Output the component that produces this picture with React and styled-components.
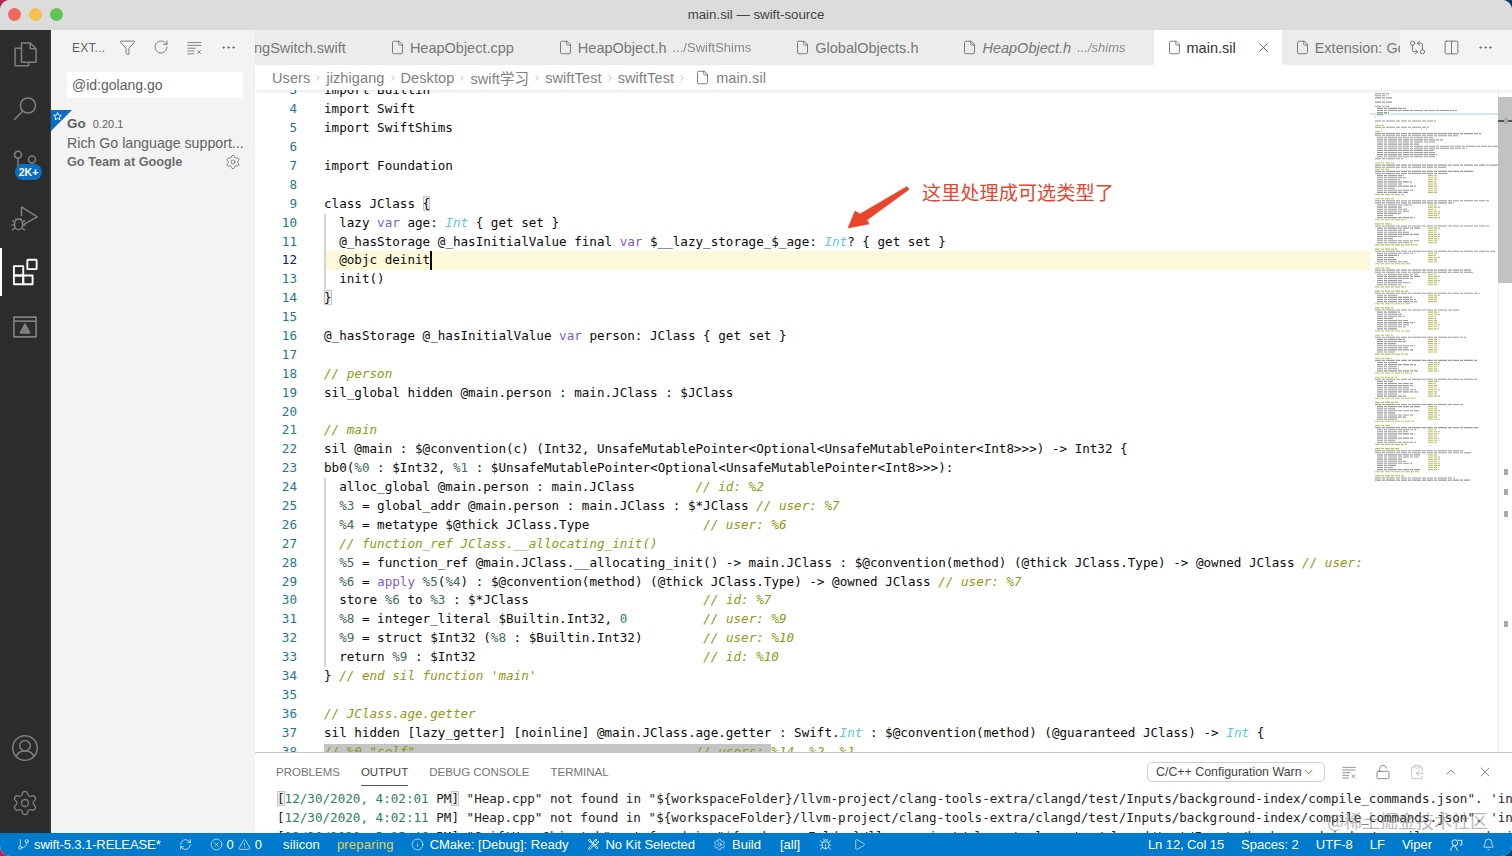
import React from "react";
import styled, { createGlobalStyle, css } from "styled-components";
import {
  Bell,
  Bug,
  ChevronDown,
  ChevronRight,
  ChevronUp,
  CircleX,
  ClipboardCopy,
  Columns2,
  Ellipsis,
  File,
  Filter,
  GitBranch,
  GitCompareArrows,
  Info,
  LockOpen,
  Play,
  RefreshCw,
  RotateCw,
  Settings,
  TriangleAlert,
  X,
} from "lucide-react";

const UI = `"Liberation Sans", "Noto Sans CJK SC", Arial, sans-serif`;
const MONO = `"DejaVu Sans Mono", "Liberation Mono", "Noto Sans CJK SC", monospace`;

const GlobalStyle = createGlobalStyle`
  html, body, #root {
    margin: 0;
    height: 100%;
    overflow: hidden;
  }
  body {
    background: linear-gradient(90deg, #b8285a 0%, #1d4f86 50%, #0b3b6b 100%);
  }
`;

const Window = styled.div`
  display: flex;
  flex-direction: column;
  height: 100vh;
  border-radius: 10px;
  overflow: hidden;
  font-family: ${UI};
  background: #fff;
  position: relative;
`;

const TitleBar = styled.div`
  flex: none;
  height: 30px;
  padding-bottom: 1px;
  box-sizing: border-box;
  background: #dcdcdc;
  display: flex;
  align-items: center;
  justify-content: center;
  position: relative;
  font-size: 13.3px;
  color: #444;
`;

const Lights = styled.div`
  position: absolute;
  left: 8px;
  top: 8px;
  display: flex;
  gap: 8px;
`;

const Light = styled.span`
  width: 13px;
  height: 13px;
  border-radius: 50%;
  background: ${(p) => p.$color};
`;

const Main = styled.div`
  flex: 1;
  min-height: 0;
  display: flex;
`;

/* activity bar */
const ActivityBar = styled.nav`
  flex: none;
  width: 50px;
  background: #2c2c2c;
  display: flex;
  flex-direction: column;
  justify-content: space-between;
  padding-bottom: 6px;
  border-right: 1px solid #3a3a3a;
`;

const ActivityGroup = styled.div`
  display: flex;
  flex-direction: column;
  gap: 6.6px;
`;

const ActivityItem = styled.div`
  height: 48px;
  display: flex;
  align-items: center;
  justify-content: center;
  position: relative;
  color: ${(p) => (p.$active ? "#fff" : "#7f7f7f")};
  box-shadow: ${(p) => (p.$active ? "inset 2px 0 #fff" : "none")};
`;

const ActivityBadge = styled.span`
  position: absolute;
  left: 15px;
  top: 25px;
  width: 27px;
  height: 16px;
  border-radius: 8px;
  background: #0a6fc2;
  color: #fff;
  font-size: 10.5px;
  font-weight: 700;
  line-height: 16px;
  text-align: center;
`;

const Glyph = ({ size = 28, width = 1.3, fill = "none", children }) => (
  <svg
    width={size}
    height={size}
    viewBox="0 0 24 24"
    fill={fill}
    stroke="currentColor"
    strokeWidth={width}
    strokeLinejoin="round"
  >
    {children}
  </svg>
);

/* side bar */
const SideBar = styled.aside`
  flex: none;
  width: 204px;
  background: #f3f3f3;
  display: flex;
  flex-direction: column;
`;

const SideHeader = styled.div`
  height: 35px;
  display: flex;
  align-items: center;
  padding-left: 21px;
  font-size: 12px;
  color: #5f5f5f;
  letter-spacing: 0.2px;
`;

const SideTitle = styled.span`
  width: 47px;
`;

const SideActions = styled.div`
  display: flex;
  gap: 17px;
  color: #666;
`;

const SearchBox = styled.div`
  margin: 7px 12px 0 16px;
  height: 26px;
  background: #fff;
  display: flex;
  align-items: center;
  padding-left: 5px;
  font-size: 14px;
  color: #616161;
`;

const ExtensionItem = styled.div`
  margin-top: 12px;
  padding: 5px 14px 0 16px;
  position: relative;
  color: #616161;
`;

const StarCorner = styled.svg`
  position: absolute;
  left: 0;
  top: 0;
`;

const ExtensionHead = styled.div`
  display: flex;
  align-items: baseline;
  gap: 7px;
  height: 18px;
  line-height: 18px;
`;

const ExtensionName = styled.span`
  font-size: 13.5px;
  font-weight: 700;
`;

const ExtensionVersion = styled.span`
  font-size: 11px;
`;

const ExtensionDesc = styled.div`
  font-size: 14.2px;
  line-height: 20px;
  white-space: nowrap;
`;

const ExtensionFoot = styled.div`
  display: flex;
  align-items: center;
  justify-content: space-between;
  margin-top: 1px;
  font-size: 12.7px;
  font-weight: 700;
  height: 16px;
  color: #6d6d6d;
`;

/* editor */
const EditorArea = styled.section`
  flex: 1;
  min-width: 0;
  display: flex;
  flex-direction: column;
  position: relative;
`;

const TabBar = styled.div`
  flex: none;
  height: 35px;
  display: flex;
  background: #ececec;
`;

const TabList = styled.div`
  flex: 1;
  min-width: 0;
  display: flex;
  overflow: hidden;
`;

const Tab = styled.div`
  flex: none;
  height: 35px;
  display: flex;
  align-items: center;
  gap: 5px;
  padding-left: ${(p) => (p.$clipped ? "0" : "13px")};
  padding-right: ${(p) => (p.$active ? "11px" : p.$italic ? "28px" : "31px")};
  margin-left: ${(p) => (p.$clipped ? "-1px" : "0")};
  font-size: 14.5px;
  white-space: nowrap;
  color: ${(p) => (p.$active ? "#333" : "#777")};
  background: ${(p) => (p.$active ? "#fff" : "transparent")};
  font-style: ${(p) => (p.$italic ? "italic" : "normal")};
`;

const TabDesc = styled.span`
  font-size: 13px;
  margin-left: 1px;
  opacity: 0.85;
`;

const TabClose = styled.span`
  display: flex;
  margin-left: 15px;
  color: #444;
`;

const TabActions = styled.div`
  flex: none;
  width: 112px;
  display: flex;
  align-items: center;
  gap: 17px;
  padding-left: 9px;
  box-sizing: border-box;
  background: #f3f3f3;
  color: #666;
`;

const Breadcrumbs = styled.div`
  flex: none;
  height: 25px;
  display: flex;
  align-items: center;
  gap: 3px;
  padding-left: 17px;
  font-size: 14.5px;
  letter-spacing: 0.1px;
  color: #808080;
  background: #fff;
  box-shadow: 0 2px 3px rgba(0, 0, 0, 0.08);
  position: relative;
  z-index: 1;
`;

const Crumb = styled.span`
  display: flex;
  align-items: center;
  gap: 6px;
  margin-left: ${(p) => (p.$file ? "5px" : "0")};
`;

const Sep = styled.span`
  display: flex;
  width: 10px;
  justify-content: center;
  color: #777;
`;

const EditorBody = styled.div`
  flex: 1;
  min-height: 0;
  display: flex;
  position: relative;
`;

const CodeScroll = styled.div`
  flex: 1;
  min-width: 0;
  overflow: hidden;
`;

const CodeLines = styled.div`
  margin-top: -8.6px;
  font-family: ${MONO};
  font-size: 12.6px;
  line-height: 18.9px;
`;

const Row = styled.div`
  display: flex;
  height: 18.9px;
  white-space: pre;
`;

const LineNo = styled.span`
  flex: none;
  width: 42px;
  margin-right: 27px;
  text-align: right;
  color: ${(p) => (p.$current ? "#0b216f" : "#237893")};
`;

const LineText = styled.span`
  flex: 1;
  color: #0a0a0a;
  ${(p) => p.$current && "background: #fdf9d8;"}
  ${(p) => p.$guide && "box-shadow: inset 2px 0 #d3d3d3;"}
`;

const tokenStyles = {
  k: css`
    color: #7a5ccf;
  `,
  t: css`
    color: #5cc6e8;
    font-style: italic;
  `,
  c: css`
    color: #8d9a12;
    font-style: italic;
  `,
  m: css`
    background: #efefef;
    box-shadow: inset 0 0 0 1px #c4c4c4;
  `,
  s: css`
    color: #8d9a12;
    font-style: italic;
    background: #c4c4c4;
  `,
  n: css`
    color: #2a7f62;
  `,
  p: css`
    color: #3f6b5a;
  `,
};

const Token = styled.span`
  ${(p) => tokenStyles[p.$kind]}
`;

const Cursor = styled.span`
  display: inline-block;
  width: 2px;
  height: 18.9px;
  margin-right: -2px;
  background: #000;
  vertical-align: top;
`;

const Minimap = styled.div`
  flex: none;
  width: 128px;
  overflow: hidden;
  filter: blur(0.4px);
`;

const Scrollbar = styled.div`
  flex: none;
  width: 14px;
  padding-top: 7px;
  box-sizing: border-box;
  border-left: 1px solid #ececec;
  position: relative;
`;

const ScrollThumb = styled.div`
  height: 186px;
  background: #c2c2c2;
  margin-left: -1px;
`;

const ScrollMark = styled.span`
  position: absolute;
  left: 5px;
  top: ${(p) => p.$top}px;
  width: 4px;
  height: 6px;
  background: #aaa;
`;

const CursorMark = styled.span`
  position: absolute;
  left: -1px;
  right: 0;
  top: 30px;
  height: 2px;
  background: #555;
`;

const Annotation = styled.div`
  position: absolute;
  left: 667px;
  top: 90px;
  font-family: "Noto Sans CJK SC", ${UI};
  font-size: 19.2px;
  line-height: 24px;
  color: #e8452c;
  white-space: nowrap;
`;

const ArrowShape = styled.svg`
  position: absolute;
  left: 590px;
  top: 93px;
`;

/* panel */
const Panel = styled.div`
  flex: none;
  height: 81px;
  border-top: 1px solid #c8c8c8;
  box-sizing: border-box;
  background: #fff;
  display: flex;
  flex-direction: column;
  overflow: hidden;
  position: relative;
  z-index: 1;
`;

const PanelHead = styled.div`
  flex: none;
  height: 37px;
  display: flex;
  align-items: center;
  padding-left: 21px;
`;

const PanelTabs = styled.div`
  display: flex;
  gap: 21px;
  flex: 1;
`;

const PanelTab = styled.span`
  font-size: 11.5px;
  line-height: 26px;
  height: 26px;
  color: ${(p) => (p.$active ? "#424242" : "#757575")};
  box-shadow: ${(p) => (p.$active ? "0 1px #555" : "none")};
`;

const OutputSelect = styled.div`
  width: 178px;
  height: 20px;
  box-sizing: border-box;
  border: 1px solid #cecece;
  border-radius: 5px;
  display: flex;
  align-items: center;
  justify-content: space-between;
  padding: 0 9px 0 8px;
  font-size: 12.4px;
  color: #444;
  white-space: nowrap;
`;

const PanelActions = styled.div`
  display: flex;
  gap: 18px;
  margin: 0 19px 0 16px;
  color: #6c6c6c;
`;

const Output = styled.div`
  font-family: ${MONO};
  font-size: 12.6px;
  line-height: 18.9px;
  white-space: pre;
  color: #222;
  padding-left: 22px;
`;

/* status bar */
const StatusBar = styled.footer`
  flex: none;
  height: 23px;
  background: #007acc;
  color: #fff;
  display: flex;
  align-items: center;
  justify-content: space-between;
  padding: 0 8.5px;
  font-size: 13px;
  white-space: nowrap;
`;

const StatusGroup = styled.div`
  display: flex;
  align-items: center;
`;

const StatusItem = styled.span`
  display: flex;
  align-items: center;
  gap: ${(p) => p.$gap ?? 6}px;
  padding: 0 8.5px;
  margin-left: ${(p) => p.$shift ?? 0}px;
  letter-spacing: ${(p) => p.$track ?? 0}px;
  color: ${(p) => p.$color ?? "inherit"};
`;

const Watermark = styled.div`
  position: absolute;
  left: 1327px;
  top: 808px;
  font-family: "Noto Sans CJK SC", ${UI};
  font-size: 18px;
  line-height: 24px;
  color: rgba(120, 120, 120, 0.55);
  white-space: nowrap;
  z-index: 2;
`;

/* code is written with §x...§ marks, x being the token kind */
const pad = (text, col, comment) => `${text.padEnd(col)}§c${comment}§`;

const LINES = [
  [3, "import Builtin"],
  [4, "import Swift"],
  [5, "import SwiftShims"],
  [6, ""],
  [7, "import Foundation"],
  [8, ""],
  [9, "class JClass §m{§"],
  [10, "  lazy §kvar§ age: §tInt§ { get set }", "guide"],
  [11, "  @_hasStorage @_hasInitialValue final §kvar§ $__lazy_storage_$_age: §tInt§? { get set }", "guide"],
  [12, "  @objc deinit§u§", "current"],
  [13, "  init()", "guide"],
  [14, "§m}§"],
  [15, ""],
  [16, "@_hasStorage @_hasInitialValue §kvar§ person: JClass { get set }"],
  [17, ""],
  [18, "§c// person§"],
  [19, "sil_global hidden @main.person : main.JClass : $JClass"],
  [20, ""],
  [21, "§c// main§"],
  [22, "sil @main : $@convention(c) (Int32, UnsafeMutablePointer<Optional<UnsafeMutablePointer<Int8>>>) -> Int32 {"],
  [23, "bb0(%0 : $Int32, %1 : $UnsafeMutablePointer<Optional<UnsafeMutablePointer<Int8>>>):"],
  [24, pad("  alloc_global @main.person : main.JClass", 49, "// id: %2"), "guide"],
  [25, "  %3 = global_addr @main.person : main.JClass : $*JClass §c// user: %7§", "guide"],
  [26, pad("  %4 = metatype $@thick JClass.Type", 50, "// user: %6"), "guide"],
  [27, "  §c// function_ref JClass.__allocating_init()§", "guide"],
  [28, "  %5 = function_ref @main.JClass.__allocating_init() -> main.JClass : $@convention(method) (@thick JClass.Type) -> @owned JClass §c// user: %6§", "guide"],
  [29, "  %6 = §kapply§ %5(%4) : $@convention(method) (@thick JClass.Type) -> @owned JClass §c// user: %7§", "guide"],
  [30, pad("  store %6 to %3 : $*JClass", 50, "// id: %7"), "guide"],
  [31, pad("  %8 = integer_literal $Builtin.Int32, §n0§", 53, "// user: %9"), "guide"],
  [32, pad("  %9 = struct $Int32 (%8 : $Builtin.Int32)", 50, "// user: %10"), "guide"],
  [33, pad("  return %9 : $Int32", 50, "// id: %10"), "guide"],
  [34, "} §c// end sil function 'main'§"],
  [35, ""],
  [36, "§c// JClass.age.getter§"],
  [37, "sil hidden [lazy_getter] [noinline] @main.JClass.age.getter : Swift.§tInt§ : $@convention(method) (@guaranteed JClass) -> §tInt§ {"],
  [38, `§s// %0 "self"                                     // users: §§c%14, %2, %1§`],
];

const renderCode = (source) =>
  source.split("§").map((part, i) => {
    if (i % 2 === 1) {
      if (part === "u") return <Cursor key={i} />;
      return (
        <Token key={i} $kind={part[0]}>
          {part.slice(1)}
        </Token>
      );
    }
    return part.split(/(%\d+)/).map((piece, j) =>
      j % 2 === 1 ? (
        <Token key={`${i}-${j}`} $kind="p">
          {piece}
        </Token>
      ) : (
        piece
      )
    );
  });

const plainOf = (source) =>
  source.replace(/§§/g, "").replace(/§[a-z]?/g, "");

/* the minimap is a drawing: one stroke per text run, made up for the lines below the fold */
const buildMinimap = () => {
  const rows = [
    { text: "sil_stage canonical" },
    {},
    ...LINES.slice(0, 36).map(([, src]) => ({
      text: plainOf(src),
      olive: src.startsWith("§c"),
    })),
  ];
  let seed = 11;
  const rnd = (a, b) => {
    seed = (seed * 16807) % 2147483647;
    return a + Math.floor((seed / 2147483647) * (b - a));
  };
  while (rows.length < 186) {
    rows.push({ len: rnd(14, 34), olive: true });
    rows.push({ len: rnd(80, 124) });
    if (rnd(0, 3) === 0) rows.push({ len: rnd(70, 120) });
    const count = rnd(3, 10);
    for (let i = 0; i < count; i++) {
      rows.push({ indent: 2, len: rnd(18, 46), note: rnd(8, 13) });
    }
    rows.push({ len: rnd(26, 46), olive: true });
    rows.push({});
  }
  let dark = "";
  let olive = "";
  rows.slice(0, 187).forEach((row, i) => {
    const y = (i * 2.1 - 0.5).toFixed(1);
    const len = row.text !== undefined ? row.text.trimEnd().length : row.len || 0;
    const indent = row.text !== undefined ? row.text.length - row.text.trimStart().length : row.indent || 0;
    if (!len) return;
    const seg = `M${5 + indent} ${y}h${Math.max(len - indent, 1)}`;
    if (row.olive) olive += seg;
    else dark += seg;
    if (row.note) olive += `M58 ${y}h${row.note}`;
  });
  return { dark, olive };
};

const MINI = buildMinimap();

const FILES = [
  { name: "HeapObject.cpp" },
  { name: "HeapObject.h", desc: ".../SwiftShims" },
  { name: "GlobalObjects.h" },
  { name: "HeapObject.h", desc: ".../shims", italic: true },
];

const CRUMBS = ["Users", "jizhigang", "Desktop", "swift学习", "swiftTest", "swiftTest"];

const OUTPUT_PATH = `"\${workspaceFolder}/llvm-project/clang-tools-extra/clangd/test/Inputs/background-index/compile_commands.json". 'in`;

const FileIcon = () => <File size={15} strokeWidth={1.2} color="#555" />;

const App = () => {
  return (
    <Window>
      <GlobalStyle />
      <TitleBar>
        <Lights>
          <Light $color="#ec6a5e" />
          <Light $color="#f4bf4f" />
          <Light $color="#61c554" />
        </Lights>
        main.sil — swift-source
      </TitleBar>

      <Main>
        <ActivityBar>
          <ActivityGroup>
            <ActivityItem>
              <Glyph>
                <path d="M9 2.5h7.5L21.5 7.500v11.500H9z" />
                <path d="M16.500 2.500v5h5" />
                <path d="M9 7H3.500v15h11.500v-3" />
              </Glyph>
            </ActivityItem>
            <ActivityItem>
              <Glyph>
                <circle cx="14.500" cy="9" r="6.500" />
                <path d="M10 14 2.500 21.500" />
              </Glyph>
            </ActivityItem>
            <ActivityItem>
              <Glyph>
                <circle cx="6" cy="5" r="3" />
                <circle cx="18" cy="9" r="3" />
                <path d="M6 8v14M18 12c0 5-12 3-12 8" />
              </Glyph>
              <ActivityBadge>2K+</ActivityBadge>
            </ActivityItem>
            <ActivityItem>
              <Glyph>
                <path d="M9 2.500 22.500 11 11 17.500" />
                <path d="M9 2.500v8" />
                <ellipse cx="6.500" cy="17.500" rx="3.500" ry="4.500" />
                <path d="M1 14l2.500 1.500M12 14l-2.500 1.500M.5 18h2.500M12.500 18H10M1 22.500l2.500-2M12 22.500l-2.500-2M3.500 13h6" />
              </Glyph>
            </ActivityItem>
            <ActivityItem $active>
              <Glyph width={1.6}>
                <rect x="2.500" y="7" width="8" height="8" />
                <rect x="2.500" y="15" width="8" height="7.500" />
                <rect x="10.500" y="15" width="8" height="7.500" />
                <rect x="14" y="1.500" width="8" height="8" rx="0.500" />
              </Glyph>
            </ActivityItem>
            <ActivityItem>
              <Glyph width={1.4}>
                <rect x="2.500" y="3.500" width="19" height="17" />
                <path d="M2.500 7h19" />
                <path d="M12 9.500 16 17H8z" fill="currentColor" />
              </Glyph>
            </ActivityItem>
          </ActivityGroup>
          <ActivityGroup>
            <ActivityItem>
              <Glyph>
                <circle cx="12" cy="12" r="10.500" />
                <circle cx="12" cy="10" r="4.500" />
                <path d="M4.500 19.500c1-3.500 4-5 7.500-5s6.500 1.500 7.500 5" />
              </Glyph>
            </ActivityItem>
            <ActivityItem>
              <Settings size={28} strokeWidth={1.1} />
            </ActivityItem>
          </ActivityGroup>
        </ActivityBar>

        <SideBar>
          <SideHeader>
            <SideTitle>EXT...</SideTitle>
            <SideActions>
              <Filter size={17} strokeWidth={1.2} />
              <RotateCw size={16} strokeWidth={1.2} />
              <Glyph size={17} width={1.1}>
                <path d="M2 5h20M2 9h20M2 13h12M2 17h10M2 21h10M16 16l5 5M21 16l-5 5" />
              </Glyph>
              <Ellipsis size={17} strokeWidth={1.4} />
            </SideActions>
          </SideHeader>
          <SearchBox>@id:golang.go</SearchBox>
          <ExtensionItem>
            <StarCorner width="21" height="21" viewBox="0 0 21 21">
              <path d="M0 0h21L0 21z" fill="#0a6fc2" />
              <path
                d="M6.500 2.500 7.600 5.100 10.400 5.300 8.300 7.100 9 9.800 6.500 8.400 4 9.800 4.700 7.100 2.600 5.300 5.400 5.100z"
                fill="none"
                stroke="#fff"
                strokeWidth="0.9"
              />
            </StarCorner>
            <ExtensionHead>
              <ExtensionName>Go</ExtensionName>
              <ExtensionVersion>0.20.1</ExtensionVersion>
            </ExtensionHead>
            <ExtensionDesc>Rich Go language support...</ExtensionDesc>
            <ExtensionFoot>
              Go Team at Google
              <Settings size={16} strokeWidth={1.2} />
            </ExtensionFoot>
          </ExtensionItem>
        </SideBar>

        <EditorArea>
          <TabBar>
            <TabList>
              <Tab $clipped>ngSwitch.swift</Tab>
              {FILES.map((file) => (
                <Tab key={file.name + file.desc} $italic={file.italic}>
                  <FileIcon />
                  {file.name}
                  {file.desc && <TabDesc>{file.desc}</TabDesc>}
                </Tab>
              ))}
              <Tab $active>
                <FileIcon />
                main.sil
                <TabClose>
                  <X size={15} strokeWidth={1.3} />
                </TabClose>
              </Tab>
              <Tab>
                <FileIcon />
                Extension: Go
              </Tab>
            </TabList>
            <TabActions>
              <GitCompareArrows size={17} strokeWidth={1.2} />
              <Columns2 size={17} strokeWidth={1.2} />
              <Ellipsis size={17} strokeWidth={1.4} />
            </TabActions>
          </TabBar>

          <Breadcrumbs>
            {CRUMBS.map((crumb, i) => (
              <React.Fragment key={i}>
                <Crumb>{crumb}</Crumb>
                <Sep>
                  <ChevronRight size={16} strokeWidth={1.1} />
                </Sep>
              </React.Fragment>
            ))}
            <Crumb $file>
              <FileIcon />
              main.sil
            </Crumb>
          </Breadcrumbs>

          <EditorBody>
            <CodeScroll>
              <CodeLines>
                {LINES.map(([num, src, flag]) => (
                  <Row key={num}>
                    <LineNo $current={flag === "current"}>{num}</LineNo>
                    <LineText $current={flag === "current"} $guide={flag === "guide" || flag === "current"}>
                      {renderCode(src)}
                    </LineText>
                  </Row>
                ))}
              </CodeLines>
            </CodeScroll>
            <Minimap>
              <svg width="128" height="662">
                <rect y="23" width="128" height="2" fill="#d5e7f5" />
                <path d={MINI.dark} stroke="#555" strokeWidth="1.1" strokeDasharray="6 1 3 1 9 1 4 1" fill="none" opacity="0.6" />
                <path d={MINI.olive} stroke="#a5ad3a" strokeWidth="1.1" strokeDasharray="5 1 3 1" fill="none" opacity="0.8" />
              </svg>
            </Minimap>
            <Scrollbar>
              <ScrollThumb />
              <CursorMark />
              <ScrollMark $top={28} />
              <ScrollMark $top={379} />
              <ScrollMark $top={399} />
              <ScrollMark $top={421} />
              <ScrollMark $top={531} />
            </Scrollbar>
            <ArrowShape width="70" height="50" viewBox="0 0 70 50">
              <path d="M62 3.500 64 6.500 22 37 24 41 3 45 10 28 15 31z" fill="#e8452c" stroke="#e8452c" strokeWidth="0.6" strokeLinejoin="round" />
            </ArrowShape>
            <Annotation>这里处理成可选类型了</Annotation>
          </EditorBody>

          <Panel>
            <PanelHead>
              <PanelTabs>
                <PanelTab>PROBLEMS</PanelTab>
                <PanelTab $active>OUTPUT</PanelTab>
                <PanelTab>DEBUG CONSOLE</PanelTab>
                <PanelTab>TERMINAL</PanelTab>
              </PanelTabs>
              <OutputSelect>
                C/C++ Configuration Warn
                <ChevronDown size={14} strokeWidth={1.2} />
              </OutputSelect>
              <PanelActions>
                <Glyph size={16} width={1.1}>
                  <path d="M2 5h20M2 9h20M2 13h12M2 17h10M2 21h10M16 16l5 5M21 16l-5 5" />
                </Glyph>
                <LockOpen size={16} strokeWidth={1.2} />
                <ClipboardCopy size={16} strokeWidth={1.2} color="#b5b5b5" />
                <ChevronUp size={16} strokeWidth={1.2} />
                <X size={16} strokeWidth={1.2} />
              </PanelActions>
            </PanelHead>
            <Output>
              <div>
                <Token $kind="m">[</Token>
                <Token $kind="n">12/30/2020, 4:02:01</Token> PM<Token $kind="m">]</Token> "Heap.cpp" not found in {OUTPUT_PATH}
              </div>
              <div>
                [<Token $kind="n">12/30/2020, 4:02:11</Token> PM] "Heap.cpp" not found in {OUTPUT_PATH}
              </div>
              <div>
                [<Token $kind="n">12/30/2020, 5:15:46</Token> PM] "SwiftHeapObject.h" not found in {OUTPUT_PATH}
              </div>
            </Output>
          </Panel>
        </EditorArea>
      </Main>

      <StatusBar>
        <StatusGroup>
          <StatusItem $gap={4} $track={-0.1}>
            <GitBranch size={13} strokeWidth={1.3} />
            swift-5.3.1-RELEASE*
          </StatusItem>
          <StatusItem $shift={1}>
            <RefreshCw size={13} strokeWidth={1.3} />
          </StatusItem>
          <StatusItem $gap={4} $shift={1}>
            <CircleX size={13} strokeWidth={1.2} />0
            <TriangleAlert size={13} strokeWidth={1.2} />0
          </StatusItem>
          <StatusItem $shift={4} $track={0.1}>silicon</StatusItem>
          <StatusItem $color="#e3cf58" $track={0.2}>preparing</StatusItem>
          <StatusItem>
            <Info size={13} strokeWidth={1.2} />
            CMake: [Debug]: Ready
          </StatusItem>
          <StatusItem $gap={5} $shift={2}>
            <Glyph size={13} width={1.6}>
              <path d="M4 2.500 2.500 4 5 7.500 7 7.500 18 19.500a1.500 1.500 0 0 0 2-2L8 7V5z" />
              <path d="M21 5.500 18 8.500 15.500 6 18.500 3a5 5 0 0 0-6 6.500L3 18.500a1.800 1.800 0 0 0 2.500 2.500L14.500 11.500a5 5 0 0 0 6.500-6z" />
            </Glyph>
            No Kit Selected
          </StatusItem>
          <StatusItem $shift={1}>
            <Settings size={13} strokeWidth={1.2} />
            Build
          </StatusItem>
          <StatusItem $shift={2}>[all]</StatusItem>
          <StatusItem $shift={2}>
            <Bug size={13} strokeWidth={1.2} />
          </StatusItem>
          <StatusItem $shift={4}>
            <Play size={13} strokeWidth={1.2} />
          </StatusItem>
        </StatusGroup>
        <StatusGroup>
          <StatusItem $track={-0.1}>Ln 12, Col 15</StatusItem>
          <StatusItem>Spaces: 2</StatusItem>
          <StatusItem>UTF-8</StatusItem>
          <StatusItem>LF</StatusItem>
          <StatusItem>Viper</StatusItem>
          <StatusItem>
            <Glyph size={14} width={1.5}>
              <circle cx="10" cy="8" r="5" />
              <path d="M3 22c0-5 3-8 7-9l5 9M15 4h7v8h-4" />
            </Glyph>
          </StatusItem>
          <StatusItem $shift={2}>
            <Bell size={13} strokeWidth={1.3} />
          </StatusItem>
        </StatusGroup>
      </StatusBar>
      <Watermark>@稀土掘金技术社区</Watermark>
    </Window>
  );
};

export default App;
